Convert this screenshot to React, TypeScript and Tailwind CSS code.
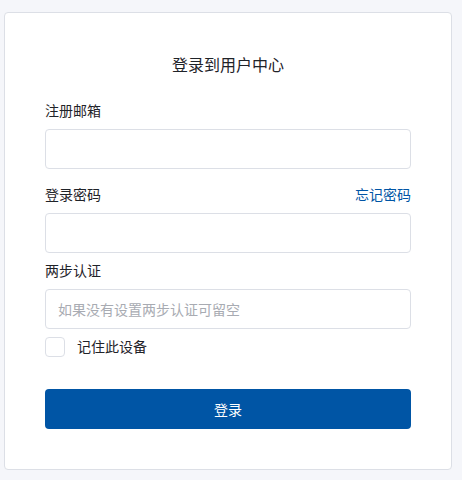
import React from "react";

export default function App() {
  const font = { fontFamily: '"Noto Sans", "Noto Sans CJK SC", sans-serif' };
  return (
    <div className="min-h-[480px] w-[462px] bg-[#f5f6fa] pt-[12px] pl-[4px]" style={font}>
      <div className="w-[448px] rounded-[4px] border border-[#dcdfe6] bg-white px-[40px] pt-[40px] pb-[40px]">
        <div className="text-center text-[16px] leading-[24px] text-[#1f2329]">登录到用户中心</div>
        <div className="mt-[24px] text-[14px] leading-[20px] text-[#1f2329]">注册邮箱</div>
        <input className="mt-[8px] block h-[40px] w-full rounded-[4px] border border-[#dcdfe6] px-[12px] text-[14px] outline-none" />
        <div className="mt-[16px] flex items-center justify-between text-[14px] leading-[20px]">
          <span className="text-[#1f2329]">登录密码</span>
          <a className="text-[#0055a5]">忘记密码</a>
        </div>
        <input type="password" className="mt-[8px] block h-[40px] w-full rounded-[4px] border border-[#dcdfe6] px-[12px] text-[14px] outline-none" />
        <div className="mt-[8px] text-[14px] leading-[20px] text-[#1f2329]">两步认证</div>
        <input
          placeholder="如果没有设置两步认证可留空"
          className="mt-[8px] block h-[40px] w-full rounded-[4px] border border-[#dcdfe6] px-[12px] text-[14px] outline-none placeholder:text-[#a8abb2]"
        />
        <div className="mt-[8px] flex items-center gap-[12px]">
          <span className="block h-[20px] w-[20px] rounded-[4px] border border-[#dcdfe6] bg-white" />
          <span className="text-[14px] leading-[20px] text-[#1f2329]">记住此设备</span>
        </div>
        <button className="mt-[32px] block h-[40px] w-full rounded-[4px] bg-[#0055a5] text-[14px] text-white">登录</button>
      </div>
    </div>
  );
}
